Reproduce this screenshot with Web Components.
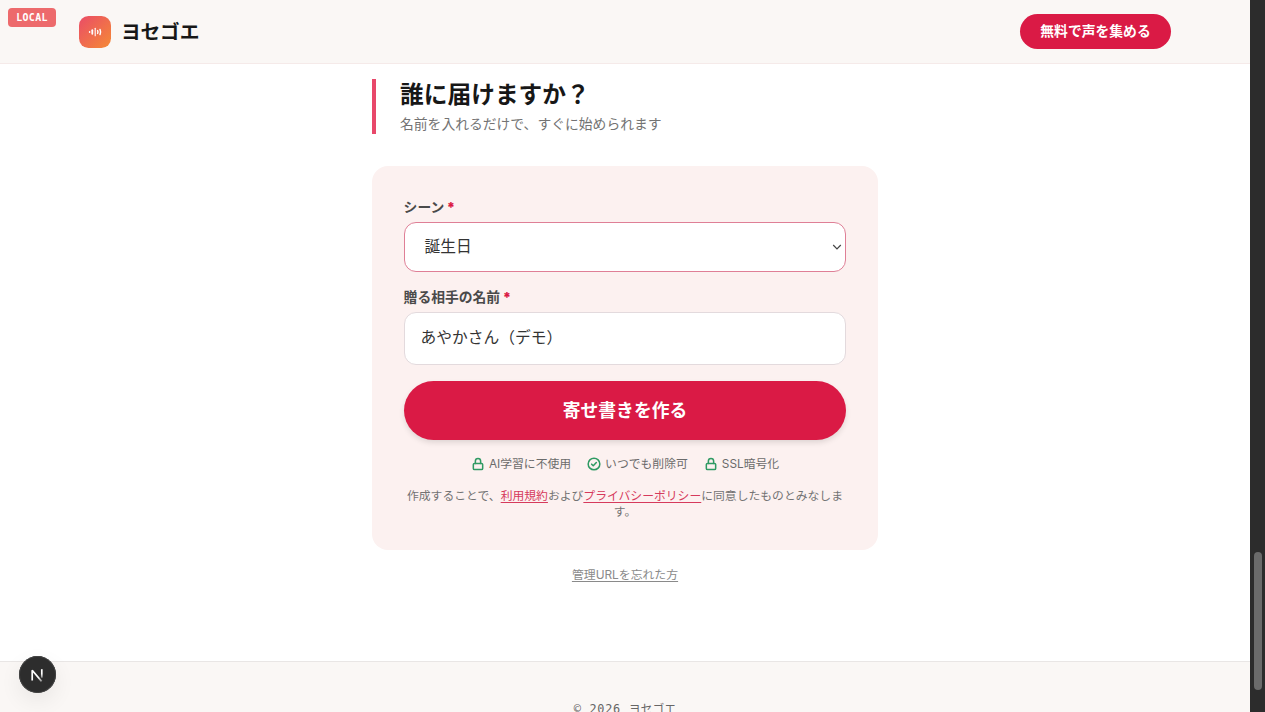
<!DOCTYPE html>
<html lang="ja">
<head>
<meta charset="utf-8">
<title>ヨセゴエ</title>
<style>
html, body {
    margin: 0;
    height: 100%;
    overflow: hidden;
}
body {
    background: #fff;
    color: #171717;
    font-family: Inter, "Noto Sans CJK JP", sans-serif;
}
</style>
</head>
<body>
<yose-app></yose-app>

<script>
'use strict';

function define(name, html) {
    customElements.define(name, class extends HTMLElement {
        constructor() {
            super();
            this.attachShadow({mode: 'open'}).innerHTML = html;
        }
    });
}

define('yose-logo', `
    <style>
    :host { display: flex; align-items: center; gap: 10px; }
    .mark {
        width: 32px; height: 32px; border-radius: 9.5px;
        background: linear-gradient(135deg, #ea4c67, #f58a36);
        display: flex; align-items: center; justify-content: center;
    }
    .name { font-size: 19.76px; line-height: 28px; font-weight: 700; letter-spacing: -.2px; }
    </style>
    <span class="mark">
        <svg width="14" height="12" viewBox="0 0 14 12" fill="none" stroke="#fff" stroke-linecap="round">
            <path d="M1.6 5.8v.4" stroke-width="1.5"/>
            <path d="M4.3 4.2v3.6" stroke-width="1.8"/>
            <path d="M7.2 2.2v7.6" stroke-width="1.1"/>
            <path d="M9.6 4.6q.8 1.4 0 2.8M12 3.4q1.2 2.6 0 5.2" stroke-width="1.4"/>
        </svg>
    </span>
    <span class="name"><slot></slot></span>
`);

define('yose-header', `
    <style>
    :host {
        display: flex; align-items: center; justify-content: space-between;
        box-sizing: border-box; height: 64px; padding: 0 79px;
        background: #faf7f5; border-bottom: 1px solid #f5eae9;
    }
    .cta {
        height: 35.5px; padding: 0 20.3px; border-radius: 18px;
        background: #da1a45; color: #fff;
        font-size: 13.8px; line-height: 35.5px; font-weight: 700;
    }
    </style>
    <yose-logo>ヨセゴエ</yose-logo>
    <span class="cta"><slot></slot></span>
`);

define('section-heading', `
    <style>
    :host {
        display: block; box-sizing: border-box; height: 55px;
        border-left: 4px solid #e8486a; padding-left: 24px;
    }
    .title { font-size: 23.72px; line-height: 32px; font-weight: 700; }
    .sub { font-size: 13.8px; line-height: 20px; margin-top: 2.5px; color: #737373; }
    </style>
    <div class="title"><slot></slot></div>
    <div class="sub"><slot name="sub"></slot></div>
`);

define('form-field', `
    <style>
    :host { display: block; }
    .label { font-size: 13.8px; line-height: 20px; font-weight: 600; color: #4a4a4a; }
    .label i { font-style: normal; font-weight: 900; color: #da1a45; margin-left: -1px; }
    .box {
        display: flex; align-items: center; justify-content: space-between;
        box-sizing: border-box; height: var(--field-height, 53px); margin-top: var(--label-gap, 5px);
        padding: 0 3px 1px var(--field-indent, 16px);
        background: #fff; border: 1px solid var(--field-border, #e3dadd); border-radius: 12px;
        font-size: 15.75px; line-height: 24px; color: #333;
    }
    svg { display: none; }
    :host([select]) svg { display: block; }
    </style>
    <div class="label"><slot name="label"></slot> <i>*</i></div>
    <div class="box">
        <span><slot></slot></span>
        <svg width="10" height="8" viewBox="0 0 10 8" fill="none" stroke="#444" stroke-width="1.2"><path d="M1.2 2L5 5.8 8.8 2"/></svg>
    </div>
`);

define('submit-button', `
    <style>
    :host {
        display: block; box-sizing: border-box; height: 59px; padding-top: 1px; border-radius: 30px;
        background: #da1a45; color: #fff; text-align: center;
        font-size: 17.79px; line-height: 58px; font-weight: 700;
        box-shadow: 0 3px 6px -1px rgba(0, 0, 0, .14);
    }
    </style>
    <slot></slot>
`);

const ICONS = {
    lock: '<rect x="4" y="11" width="16" height="10.5" rx="2"/><path d="M7.5 11V7a4.5 4.5 0 0 1 9 0v4"/>',
    check: '<circle cx="12" cy="12" r="10"/><path d="M8 12.3l2.7 2.7L16 9.5"/>'
};

customElements.define('trust-badge', class extends HTMLElement {
    constructor() {
        super();
        this.attachShadow({mode: 'open'}).innerHTML = `
            <style>
            :host { display: flex; align-items: center; gap: 4px; font-size: 11.82px; line-height: 16px; color: #6b6b6b; }
            svg { display: block; }
            </style>
            <svg width="14" height="14" viewBox="0 0 24 24" fill="none" stroke="#2f9a63" stroke-width="2.6" stroke-linecap="round" stroke-linejoin="round"></svg>
            <span><slot></slot></span>
        `;
    }

    connectedCallback() {
        this.shadowRoot.querySelector('svg').innerHTML = ICONS[this.getAttribute('icon')];
    }
});

define('start-form', `
    <style>
    :host {
        display: block; box-sizing: border-box; height: 384px; padding: 31px 31.6px 0;
        background: #fcf1f0; border-radius: 16px;
    }
    .scene { --field-height: 50px; --field-indent: 20px; --field-border: #df7f96; }
    .name { margin-top: 15px; }
    submit-button { margin-top: 15.5px; }
    .badges { display: flex; justify-content: center; gap: 16px; margin-top: 16.5px; }
    .terms { margin: 15.9px -1px 0; text-align: center; font-size: 11.82px; line-height: 16px; color: #737373; }
    .terms a { color: #d63a5c; text-decoration: underline; text-underline-offset: 2px; }
    </style>
    <form-field class="scene" select><span slot="label">シーン</span>誕生日</form-field>
    <form-field class="name"><span slot="label">贈る相手の名前</span>あやかさん（デモ）</form-field>
    <submit-button>寄せ書きを作る</submit-button>
    <div class="badges">
        <trust-badge icon="lock">AI学習に不使用</trust-badge>
        <trust-badge icon="check">いつでも削除可</trust-badge>
        <trust-badge icon="lock">SSL暗号化</trust-badge>
    </div>
    <div class="terms">作成することで、<a>利用規約</a>および<a>プライバシーポリシー</a>に同意したものとみなします。</div>
`);

define('yose-footer', `
    <style>
    :host {
        display: block; flex: none; box-sizing: border-box; height: 110px; padding-top: 39px;
        background: #faf7f5; border-top: 1px solid #e9e6e5;
        text-align: center; font-size: 11.86px; line-height: 16px; color: #666;
    }
    .year { font-family: "DejaVu Sans Mono", monospace; letter-spacing: .7px; }
    </style>
    <span class="year">© 2026 </span><slot></slot>
`);

define('page-scrollbar', `
    <style>
    :host { display: flow-root; width: 15px; height: 712px; background: #2c2c2c; }
    .thumb { width: 8px; height: 138px; margin: 552px 0 0 4px; border-radius: 4px; background: #6b6b6b; }
    </style>
    <div class="thumb"></div>
`);

define('env-badge', `
    <style>
    :host {
        position: absolute; left: 8px; top: 8px; width: 48px; height: 19px; border-radius: 4px;
        background: #ed6a6c; color: #fff; text-align: center;
        font: 700 9.9px/19px "DejaVu Sans Mono", monospace; letter-spacing: .35px;
    }
    </style>
    <slot></slot>
`);

define('dev-indicator', `
    <style>
    :host {
        position: absolute; left: 19px; top: 656px; width: 37px; height: 37px; border-radius: 50%;
        background: #2d2d2d; box-shadow: 0 0 0 1px #444 inset, 0 8px 22px rgba(0, 0, 0, .07);
    }
    svg { display: block; }
    </style>
    <svg width="37" height="37" viewBox="0 0 37 37" fill="none" stroke-width="1.7">
        <defs>
            <linearGradient id="stem" x1="0" y1="13" x2="0" y2="25" gradientUnits="userSpaceOnUse">
                <stop offset=".4" stop-color="#fff"/><stop offset="1" stop-color="#fff" stop-opacity="0"/>
            </linearGradient>
            <linearGradient id="diag" x1="13" y1="13" x2="24" y2="27" gradientUnits="userSpaceOnUse">
                <stop offset=".6" stop-color="#fff"/><stop offset="1" stop-color="#fff" stop-opacity=".2"/>
            </linearGradient>
        </defs>
        <path d="M13.2 24.5V14.2L22.6 25.4" stroke="url(#diag)" stroke-linejoin="bevel"/>
        <path d="M22.8 13.2v8.5" stroke="url(#stem)"/>
    </svg>
`);

define('yose-app', `
    <style>
    :host { display: flex; height: 712px; overflow: hidden; position: relative; }
    .page { flex: 1; display: flex; flex-direction: column; height: 712px; overflow: hidden; }
    yose-header { flex: none; }
    main { width: 506px; height: 597px; flex: none; margin: 0 auto; padding-top: 15px; box-sizing: border-box; }
    start-form { margin-top: 32px; }
    .forgot { margin-top: 17px; text-align: center; font-size: 11.86px; line-height: 16px; color: #8a8a8a; }
    .forgot a { text-decoration: underline; text-underline-offset: 2px; }
    </style>
    <div class="page">
        <yose-header>無料で声を集める</yose-header>
        <main>
            <section-heading>誰に届けますか？<span slot="sub">名前を入れるだけで、すぐに始められます</span></section-heading>
            <start-form></start-form>
            <div class="forgot"><a>管理URLを忘れた方</a></div>
        </main>
        <yose-footer>ヨセゴエ</yose-footer>
    </div>
    <page-scrollbar></page-scrollbar>
    <env-badge>LOCAL</env-badge>
    <dev-indicator></dev-indicator>
`);
</script>
</body>
</html>
